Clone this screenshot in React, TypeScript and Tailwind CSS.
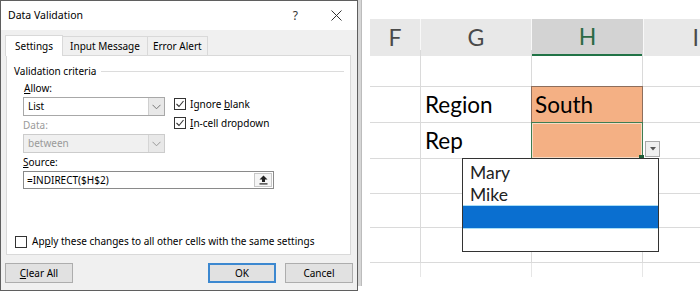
import React from "react";

function Check({ checked }: { checked?: boolean }) {
  return (
    <span className="w-[12px] h-[12px] border border-[#333333] bg-white flex items-center justify-center shrink-0">
      {checked && (
        <svg width="10" height="10" viewBox="0 0 10 10">
          <path d="M1.5 5 L4 7.5 L8.5 2" stroke="#333333" strokeWidth="1.1" fill="none" />
        </svg>
      )}
    </span>
  );
}

function Chevron({ color = "#555555" }: { color?: string }) {
  return (
    <svg width="9" height="6" viewBox="0 0 9 6">
      <path d="M0.5 0.8 L4.5 4.8 L8.5 0.8" stroke={color} strokeWidth="1" fill="none" />
    </svg>
  );
}

function Dialog() {
  return (
    <div className="w-[358px] h-[291px] shrink-0 border border-[#5f5f5f] bg-[#f0f0f0] flex flex-col font-['Noto_Sans',sans-serif] text-[10px] text-black">
      {/* Title bar */}
      <div className="h-[29px] bg-white flex items-center pl-[7px] pr-[15px]">
        <span className="text-[10.5px]">Data Validation</span>
        <span className="ml-auto text-[12px] text-[#333] mr-[33px]">?</span>
        <svg width="11" height="11" viewBox="0 0 11 11">
          <path d="M0.5 0.5 L10.5 10.5 M10.5 0.5 L0.5 10.5" stroke="#333" strokeWidth="1" />
        </svg>
      </div>
      {/* Tabs */}
      <div className="px-[4px] pt-[5px]">
        <div className="flex items-end h-[20px] relative z-10">
          <div className="h-[21px] bg-white border border-b-0 border-[#d9d9d9] px-[9px] flex items-center -mb-px">Settings</div>
          <div className="h-[19px] border border-b-0 border-l-0 border-[#d9d9d9] px-[7px] flex items-center">Input Message</div>
          <div className="h-[19px] border border-b-0 border-l-0 border-[#d9d9d9] px-[5px] flex items-center">Error Alert</div>
        </div>
        {/* Panel */}
        <div className="ml-px w-[345px] h-[200px] bg-white border border-[#d9d9d9] pt-[8px]">
          <div className="flex items-center h-[14px] pl-[7px] pr-[6px]">
            <span>Validation criteria</span>
            <div className="flex-1 h-px bg-[#dcdcdc] ml-[5px]" />
          </div>
          <div className="flex pl-[16px] mt-[3px]">
            <div className="flex flex-col">
              <div className="h-[14px] leading-[14px] pl-px">
                <span className="underline">A</span>llow:
              </div>
              <div className="mt-[2px] w-[142px] h-[19px] border border-[#a8a8a8] flex items-center">
                <span className="pl-[4px] flex-1">List</span>
                <div className="w-[16px] h-full bg-[#e8e8e8] border-l border-[#cfcfcf] flex items-center justify-center">
                  <Chevron color="#777" />
                </div>
              </div>
              <div className="mt-[2px] h-[14px] leading-[14px] text-[#9a9a9a]">Data:</div>
              <div className="mt-[2px] w-[142px] h-[19px] border border-[#cccccc] bg-[#f0f0f0] flex items-center text-[#9a9a9a]">
                <span className="pl-[4px] flex-1">between</span>
                <div className="w-[16px] h-full bg-[#e8e8e8] border-l border-[#d5d5d5] flex items-center justify-center">
                  <Chevron color="#999" />
                </div>
              </div>
            </div>
            <div className="flex flex-col ml-[9px] pt-[17px] gap-[7px]">
              <div className="flex items-center gap-[4px] h-[12px]">
                <Check checked />
                <span>Ignore <span className="underline">b</span>lank</span>
              </div>
              <div className="flex items-center gap-[4px] h-[12px]">
                <Check checked />
                <span><span className="underline">I</span>n-cell dropdown</span>
              </div>
            </div>
          </div>
          <div className="pl-[16px]">
            <div className="mt-[2px] h-[14px] leading-[14px]">
              <span className="underline">S</span>ource:
            </div>
            <div className="mt-[2px] w-[251px] h-[18px] border border-[#8a8a8a] flex items-center">
              <span className="pl-[3px] flex-1">=INDIRECT($H$2)</span>
              <div className="w-[18px] h-[14px] mr-px border border-[#c8c8c8] bg-[#f5f5f5] flex items-center justify-center">
                <svg width="9" height="10" viewBox="0 0 9 10">
                  <path d="M4.5 0.5 L8.5 4.5 L6 4.5 L6 7 L3 7 L3 4.5 L0.5 4.5 Z" fill="#222" />
                  <rect x="0.5" y="8.3" width="8" height="1.2" fill="#222" />
                </svg>
              </div>
            </div>
          </div>
          <div className="flex items-center gap-[5px] pl-[8px] mt-[45px]">
            <Check />
            <span>Ap<span className="underline">p</span>ly these changes to all other cells with the same settings</span>
          </div>
        </div>
      </div>
      {/* Buttons */}
      <div className="flex px-[4px] mt-[8px]">
        <div className="w-[68px] h-[20px] bg-[#e1e1e1] border border-[#adadad] flex items-center justify-center">
          <span><span className="underline">C</span>lear All</span>
        </div>
        <div className="ml-auto w-[68px] h-[20px] bg-[#e1e1e1] border-2 border-[#3c88d0] flex items-center justify-center">OK</div>
        <div className="ml-[9px] w-[68px] h-[20px] bg-[#e1e1e1] border border-[#adadad] flex items-center justify-center">Cancel</div>
      </div>
    </div>
  );
}

const rowHeights = [37, 36, 36, 35, 34, 35];

function Sheet() {
  return (
    <div className="flex-1 h-full relative flex font-['Lato',sans-serif] text-black">
      {/* strip */}
      <div className="w-[12px] h-full flex">
        <div className="w-[4px] h-[286px] bg-[#d6d6d6] border-r border-[#bcbcbc]" />
      </div>
      <div className="flex-1 flex flex-col">
        <div className="h-[19px]" />
        <div className="grid grid-cols-[51px_111px_111px_1fr] h-[31px] text-[23px] text-[#4a4a4a]">
          <div className="bg-[#e8e8e8] border-r border-[#f8f8f8] flex items-center justify-center">F</div>
          <div className="bg-[#e8e8e8] border-r border-[#f8f8f8] flex items-center justify-center">G</div>
          <div className="bg-[#d3d3d3] border-b-2 border-[#217346] flex items-center justify-center text-[#2d6a45]">H</div>
          <div className="bg-[#e8e8e8] border-l border-[#f8f8f8] flex items-center justify-end pr-[1px]">
            <span>I</span>
          </div>
        </div>
        {rowHeights.map((h, i) => (
          <div key={i} className="grid grid-cols-[51px_111px_111px_1fr] border-b border-[#dadada]" style={{ height: h }}>
            <div className="border-r border-[#dadada]" />
            <div className="border-r border-[#dadada] flex items-center pl-[4px] text-[22.5px]">
              {i === 1 ? "Region" : i === 2 ? "Rep" : ""}
            </div>
            <div className="border-r border-[#dadada] relative">
              {i === 1 && (
                <div className="absolute -inset-px bg-[#f4b084] border border-[#8d6e5c] flex items-center pl-[3px] text-[22.5px]">
                  South
                </div>
              )}
              {i === 2 && (
                <div className="absolute -inset-px bg-[#f4b084] border border-[#3f7d52] shadow-[inset_0_0_0_1px_#f6dcc6]">
                  <div className="absolute -right-[2px] -bottom-[2px] w-[5px] h-[5px] bg-[#1f5c36]" />
                </div>
              )}
            </div>
            <div />
          </div>
        ))}
        <div className="grid grid-cols-[51px_111px_111px_1fr] h-[14px]">
          <div className="border-r border-[#e6e6e6]" />
          <div className="border-r border-[#e6e6e6]" />
          <div className="border-r border-[#e6e6e6]" />
          <div />
        </div>
      </div>
      {/* dropdown button */}
      <div className="absolute left-[287px] top-[141px] w-[15px] h-[16px] bg-[#efefef] border border-[#a9a9a9] flex items-center justify-center">
        <svg width="6" height="4" viewBox="0 0 6 4">
          <path d="M0 0 L6 0 L3 3.5 Z" fill="#555" />
        </svg>
      </div>
      {/* dropdown list */}
      <div className="absolute left-[104px] top-[158px] w-[197px] h-[94px] bg-white border border-[#333] flex flex-col text-[17.5px] text-[#222]">
        <div className="h-[23px] leading-[23px] pl-[7px] pt-[2px]">Mary</div>
        <div className="h-[23px] leading-[23px] pl-[7px] pt-[1px]">Mike</div>
        <div className="h-[24px] bg-[#0a6fd0] border-y border-[#a8def6]" />
        <div className="flex-1" />
      </div>
    </div>
  );
}

export default function App() {
  return (
    <div className="w-[700px] h-[292px] bg-white flex overflow-hidden">
      <Dialog />
      <Sheet />
    </div>
  );
}
